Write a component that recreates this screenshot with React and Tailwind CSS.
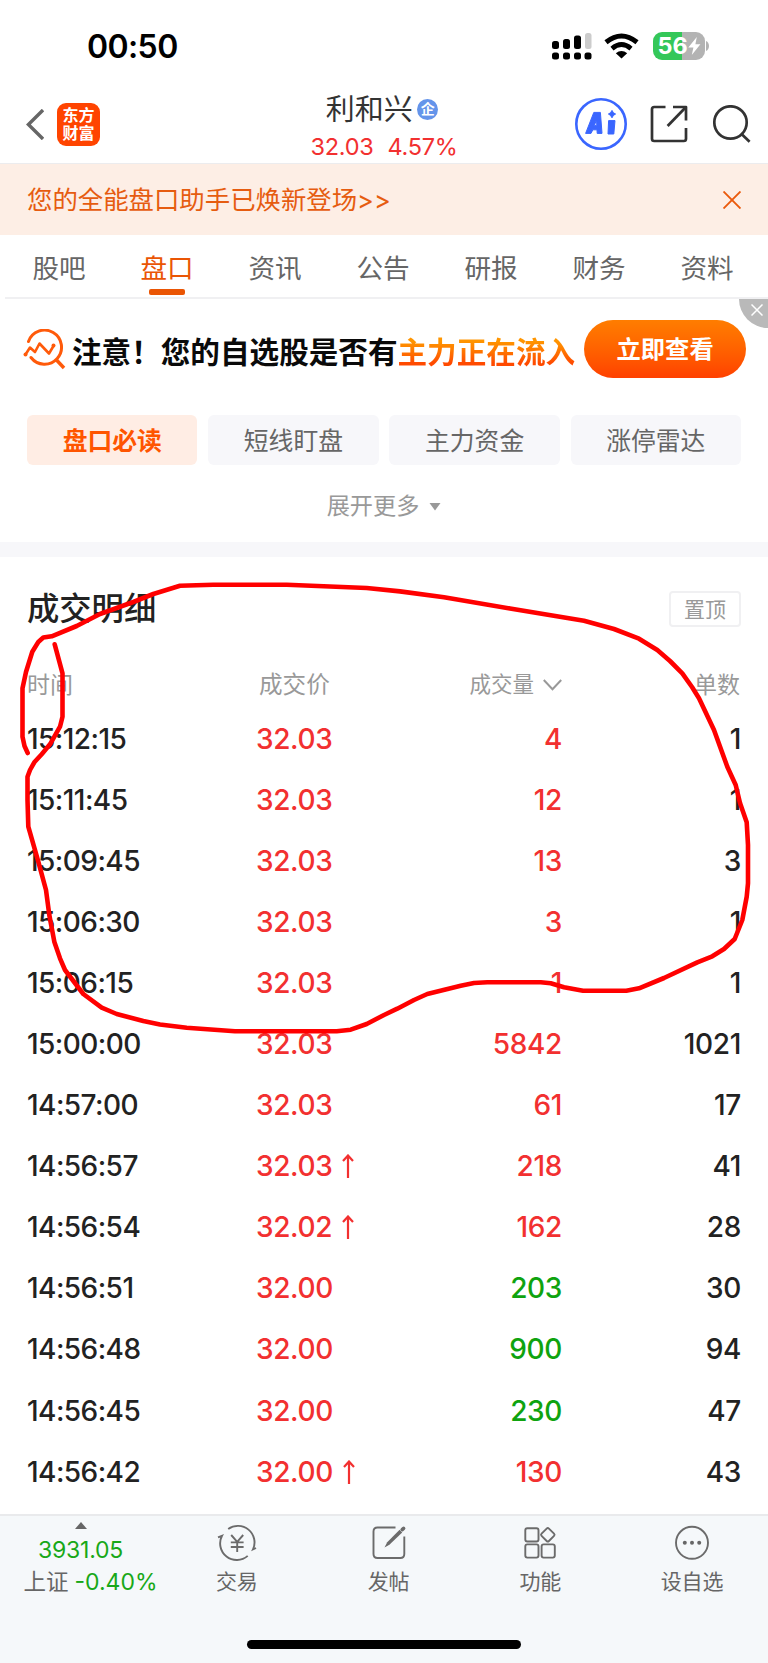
import React, { useState } from 'react';

const tabs = ['股吧', '盘口', '资讯', '公告', '研报', '财务', '资料'];
const shortcuts = ['盘口必读', '短线盯盘', '主力资金', '涨停雷达'];

const trades = [
  { time: '15:12:15', price: '32.03', volume: '4', count: '1' },
  { time: '15:11:45', price: '32.03', volume: '12', count: '1' },
  { time: '15:09:45', price: '32.03', volume: '13', count: '3' },
  { time: '15:06:30', price: '32.03', volume: '3', count: '1' },
  { time: '15:06:15', price: '32.03', volume: '1', count: '1' },
  { time: '15:00:00', price: '32.03', volume: '5842', count: '1021' },
  { time: '14:57:00', price: '32.03', volume: '61', count: '17' },
  { time: '14:56:57', price: '32.03', up: true, volume: '218', count: '41' },
  { time: '14:56:54', price: '32.02', up: true, volume: '162', count: '28' },
  { time: '14:56:51', price: '32.00', volume: '203', sell: true, count: '30' },
  { time: '14:56:48', price: '32.00', volume: '900', sell: true, count: '94' },
  { time: '14:56:45', price: '32.00', volume: '230', sell: true, count: '47' },
  { time: '14:56:42', price: '32.00', up: true, volume: '130', count: '43' },
];

const StatusBar = () => (
  <div className="flex h-[90px] items-center justify-between pl-[87px] pr-[58px] pt-[1px]">
    <span className="pt-[2px] text-[32px] font-semibold leading-none tracking-[-0.6px] text-black">00:50</span>
    <div className="flex items-center">
      <svg width="40" height="28" viewBox="0 0 40 28">
        <rect x="0" y="9" width="7" height="8" rx="2.5" />
        <rect x="11" y="7" width="7" height="10" rx="2.5" />
        <rect x="22" y="3.5" width="7" height="13.5" rx="2.5" />
        <rect x="33" y="1" width="6.5" height="16" rx="2.5" fill="#ccc" />
        <rect x="0" y="20.5" width="7" height="7" rx="2.5" />
        <rect x="11" y="20.5" width="7" height="7" rx="2.5" />
        <rect x="22" y="20.5" width="7" height="7" rx="2.5" />
        <rect x="32.5" y="20.5" width="7" height="7" rx="2.5" />
      </svg>
      <svg className="ml-[12.5px]" width="35" height="26" viewBox="0 0 35 26">
        <path d="M2 9.2 Q17.5 -3.2 33 9.2" fill="none" stroke="#000" strokeWidth="5" />
        <path d="M8 15.6 Q17.5 7.6 27 15.6" fill="none" stroke="#000" strokeWidth="4.8" />
        <path d="M11.8 20.2 Q17.5 15.6 23.2 20.2 L17.5 25.5Z" />
      </svg>
      <div className="ml-[13.5px] flex h-7 w-[52px] items-center rounded-[9px] bg-linear-to-r from-[#34c759] from-56% to-[#b3b3b3] to-56% pl-[5px]">
        <span className="text-[23.5px] font-bold leading-none text-white">56</span>
        <svg width="13" height="18" viewBox="0 0 13 18" fill="#fff">
          <path d="M8.8 0 L0.3 10.4 H5.4 L3.8 18 L12.4 7.2 H7.4Z" />
        </svg>
      </div>
      <svg className="ml-[1.5px]" width="4" height="10" viewBox="0 0 4 10">
        <path d="M0 0 C4 1.5 4 8.5 0 10Z" fill="#b3b3b3" />
      </svg>
    </div>
  </div>
);

const Header = () => (
  <header className="grid h-[74px] grid-cols-[257px_1fr_257px] border-b border-[#ececee]">
    <div className="flex items-center pb-[6px] pl-[26px] pt-[1px]">
      <svg width="18" height="31" viewBox="0 0 18 31" fill="none" stroke="#666" strokeWidth="3.4">
        <path d="M17 1 L2.4 15.5 L17 30" />
      </svg>
      <div className="ml-[13px] flex size-[43px] flex-col items-center justify-center rounded-[9px] bg-[#ff4400] text-[16px] font-bold leading-[17.5px] text-white">
        <span>东方</span>
        <span>财富</span>
      </div>
    </div>
    <div className="flex flex-col items-center">
      <div className="flex h-[38px] items-center gap-[4.5px] pr-[4px]">
        <h1 className="text-[29px] leading-none text-[#333]">利和兴</h1>
        <span className="flex size-[21px] items-center justify-center rounded-full bg-[#6494ea] text-[14px] font-bold leading-none text-white">
          企
        </span>
      </div>
      <div className="flex h-[36px] items-center gap-[14px] pt-[2px] text-[23.5px] leading-none tracking-[-0.3px] text-[#f23030]">
        <span>32.03</span>
        <span>4.57%</span>
      </div>
    </div>
    <div className="flex items-center justify-end pb-[6px] pr-[17px]">
      <svg width="52" height="52" viewBox="0 0 52 52" fill="none">
        <circle cx="26" cy="26" r="24.7" stroke="#3a66ff" strokeWidth="2.6" />
        <g fill="#3a66ff" stroke="#3a66ff" strokeWidth="1" strokeLinejoin="round">
          <path
            d="M18.8 14.4 H25.4 L27 35.4 H22.2 L22 31.8 H17.8 L16 35.4 H10.6Z M19.4 27.4 H21.8 L21.5 21.8Z"
            fillRule="evenodd"
          />
          <path d="M33.6 22.6 H40 L38.8 36 H33Z" />
          <path d="M37 12.4 L38.4 14.8 L40.6 16 L38.4 17.4 L37 19.8 L35.5 17.4 L33.4 16 L35.5 14.8Z" />
        </g>
      </svg>
      <svg className="ml-[23px]" width="38" height="38" viewBox="0 0 38 38" fill="none" stroke="#333" strokeWidth="2.7">
        <path d="M15.5 2 H4.2 Q2 2 2 4.2 V33.8 Q2 36 4.2 36 H33.8 Q36 36 36 33.8 V23" />
        <path d="M23 2 H36 V15.5" strokeLinejoin="round" />
        <path d="M36 2 L17.6 21" />
      </svg>
      <svg className="ml-[24px]" width="39" height="38" viewBox="0 0 39 38" fill="none" stroke="#333" strokeWidth="2.7">
        <circle cx="18.5" cy="17.5" r="16.2" />
        <path d="M29 28.5 L37.6 36.8" />
      </svg>
    </div>
  </header>
);

const Notice = () => (
  <div className="flex h-[71px] items-center justify-between bg-[#fdeee5] pl-[27px] pr-[27px] text-[25.4px] leading-none text-[#e65c10]">
    <span className="pt-[1px]">您的全能盘口助手已焕新登场&gt;&gt;</span>
    <svg width="18" height="18" viewBox="0 0 18 18" fill="none" stroke="#ea5a0c" strokeWidth="1.9">
      <path d="M0.5 0.5 L17.5 17.5 M17.5 0.5 L0.5 17.5" />
    </svg>
  </div>
);

const Tabs = () => {
  const [active, setActive] = useState('盘口');

  return (
    <nav className="ml-[5px] grid h-[64px] grid-cols-7 border-b-2 border-[#f0f0f2] pr-[7px]">
      {tabs.map((tab) => (
        <button key={tab} className="flex flex-col items-center pt-[20px]" onClick={() => setActive(tab)}>
          <span className={`text-[26.6px] leading-none ${tab === active ? 'text-[#ea5504]' : 'text-[#666]'}`}>{tab}</span>
          {tab === active && <span className="mt-[7px] h-[6px] w-[36px] shrink-0 rounded-[2px] bg-[#ea5504]" />}
        </button>
      ))}
    </nav>
  );
};

const Promo = () => (
  <div className="relative flex h-[101px] items-center pb-[1px] pl-[23px]">
    <svg width="43" height="41" viewBox="0 0 43 41" fill="none" stroke="#ff5a0a" strokeWidth="3">
      <path d="M5.5 12.5 A17 17 0 1 1 8 28.5" strokeLinecap="round" />
      <path d="M33.5 31 L41 39" strokeWidth="3.4" />
      <path d="M2.5 25.5 L7 18.5 L12 23 L16.5 14.5 L26 24.5 L30.5 17" strokeWidth="2.6" strokeLinejoin="round" />
      <circle cx="2.5" cy="25.5" r="2" fill="#ff5a0a" stroke="none" />
      <circle cx="30.5" cy="16.5" r="2" fill="#ff5a0a" stroke="none" />
    </svg>
    <p className="ml-[6px] whitespace-nowrap pt-[5px] text-[29.6px] font-bold leading-[36px] text-[#0a0a0a]">
      注意！您的自选股是否有
      <span className="bg-linear-to-b from-[#ff9500] from-20% to-[#ff4a00] to-80% bg-clip-text text-transparent">
        主力正在流入
      </span>
    </p>
    <button className="ml-[9px] h-[58px] w-[162px] rounded-full bg-linear-to-b from-[#ff7d00] to-[#ff4000] text-[24.3px] font-bold leading-none text-white">
      立即查看
    </button>
    <button className="absolute right-0 top-0 flex h-[29px] w-[29px] items-center justify-center rounded-bl-full bg-[#b9b9b9] pb-[7px] pl-[7px]">
      <svg width="12" height="12" viewBox="0 0 12 12" fill="none" stroke="#fff" strokeWidth="1.5">
        <path d="M0.5 0.5 L11.5 11.5 M11.5 0.5 L0.5 11.5" />
      </svg>
    </button>
  </div>
);

const Shortcuts = () => (
  <div className="h-[142px] px-[27px] pt-[15px]">
    <div className="grid grid-cols-4 gap-[10.7px]">
      {shortcuts.map((name, i) => (
        <button
          key={name}
          className={`h-[50px] rounded-[6px] pt-[2px] text-[24.8px] leading-none ${
            i === 0 ? 'bg-[#ffede4] font-bold text-[#ff5500]' : 'bg-[#f7f7fa] text-[#666]'
          }`}
        >
          {name}
        </button>
      ))}
    </div>
    <button className="mx-auto flex h-[84px] items-center justify-center gap-[10px] text-[23.2px] leading-none text-[#999]">
      展开更多
      <svg width="12" height="8" viewBox="0 0 12 8" fill="#999">
        <path d="M0.5 0 H11.5 L6 7.5Z" />
      </svg>
    </button>
  </div>
);

const UpArrow = () => (
  <svg className="ml-[10px]" width="12" height="24" viewBox="0 0 12 24" fill="none" stroke="#f23030" strokeWidth="2.2">
    <path d="M6 24 V1.5 M1 7 L6 1.5 L11 7" />
  </svg>
);

const TradeList = () => (
  <section className="h-[957px] px-[27px]">
    <div className="flex h-[104px] items-center justify-between">
      <h2 className="pt-[1px] text-[32.3px] font-medium leading-none text-[#222]">成交明细</h2>
      <button className="h-[36px] w-[72px] rounded-[4px] border-2 border-[#f0f0f2] text-[21px] leading-none text-[#999]">
        置顶
      </button>
    </div>
    <div className="grid h-[47px] grid-cols-[230px_150px_155px_179px] items-center pt-[1px] text-[23px] leading-none text-[#999]">
      <span>时间</span>
      <span className="pl-[2px] text-[23.6px]">成交价</span>
      <span className="flex items-center justify-end gap-[9px] text-[21.5px]">
        成交量
        <svg width="19" height="12" viewBox="0 0 19 12" fill="none" stroke="#999" strokeWidth="2">
          <path d="M0.8 1 L9.5 10.3 L18.2 1" />
        </svg>
      </span>
      <span className="pr-[1px] text-right">单数</span>
    </div>
    {trades.map((trade) => (
      <div
        key={trade.time}
        className="grid h-[61.1px] grid-cols-[229px_151px_155px_179px] items-center text-[28px] font-medium leading-none tracking-[-0.35px] text-[#222]"
      >
        <span className="tracking-[-0.55px]">{trade.time}</span>
        <span className="flex items-center text-[#f23030]">
          {trade.price}
          {trade.up && <UpArrow />}
        </span>
        <span className={`text-right ${trade.sell ? 'text-[#0fa30f]' : 'text-[#f23030]'}`}>{trade.volume}</span>
        <span className="text-right">{trade.count}</span>
      </div>
    ))}
  </section>
);

const NavItem = ({ label, children }) => (
  <button className="flex flex-col items-center pt-[8px] text-[21px] leading-none text-[#666]">
    <svg width="40" height="38" viewBox="0 0 40 38" fill="none" stroke="#6b6b6b" strokeWidth="1.9">
      {children}
    </svg>
    <span className="mt-[9px]">{label}</span>
  </button>
);

const BottomBar = () => (
  <footer className="h-[149px] border-t-2 border-[#e9eaec] bg-[#f5f8fa]">
    <div className="grid h-[124px] grid-cols-[161px_repeat(4,1fr)]">
      <div className="flex flex-col items-center pt-[6px]">
        <svg width="12" height="7" viewBox="0 0 12 7" fill="#666">
          <path d="M0 7 H12 L6 0Z" />
        </svg>
        <span className="mt-[10px] text-[23px] leading-none tracking-[-0.2px] text-[#18a818]">3931.05</span>
        <div className="mt-[8px] flex items-center gap-[6px] pl-[20px] text-[22.5px] leading-none text-[#666]">
          上证
          <span className="pt-[1px] text-[23px] text-[#18a818]">-0.40%</span>
        </div>
      </div>
      <NavItem label="交易">
        <path d="M11.2 5 A16.6 16.6 0 0 1 36 25.4 L39 24 M30.7 31.9 A16.6 16.6 0 0 1 5 11.8 L1 13.4" />
        <path d="M14.2 11 L20.2 17.8 L26.2 11 M20.2 17.8 V28 M13.8 18.4 H26.6 M13.8 23 H26.6" />
      </NavItem>
      <NavItem label="发帖">
        <path d="M26.5 3.5 H8.5 Q4.5 3.5 4.5 7.5 V30 Q4.5 34 8.5 34 H31.3 Q35.3 34 35.3 30 V12.5" />
        <path d="M15.5 23.4 L18.2 18.2 L30.6 5.8 L33.2 8.4 L20.4 20.8Z" fill="#6b6b6b" stroke="none" />
        <path d="M33.2 5.6 L34.6 4.4" strokeWidth="3.6" strokeLinecap="round" />
      </NavItem>
      <NavItem label="功能">
        <rect x="5.3" y="4.3" width="13.2" height="13.2" rx="2" />
        <rect x="5.3" y="20.4" width="13.2" height="13.2" rx="2" />
        <rect x="21.6" y="20.4" width="13.2" height="13.2" rx="2" />
        <rect x="22.6" y="5.6" width="10.4" height="10.4" rx="1.6" transform="rotate(45 27.8 10.8)" />
      </NavItem>
      <NavItem label="设自选">
        <circle cx="20" cy="18.8" r="16" />
        <g fill="#666" stroke="none">
          <circle cx="12.8" cy="18.8" r="2" />
          <circle cx="20" cy="18.8" r="2" />
          <circle cx="27.2" cy="18.8" r="2" />
        </g>
      </NavItem>
    </div>
    <div className="mx-auto h-[9px] w-[274px] rounded-full bg-black" />
  </footer>
);

// Hand-drawn red marker loop over the trade list
const Marker = () => (
  <svg
    className="pointer-events-none absolute left-0 top-0"
    width="768"
    height="1663"
    viewBox="0 0 768 1663"
    fill="none"
    stroke="#ff0000"
    strokeWidth="4.6"
    strokeLinecap="round"
    strokeLinejoin="round"
  >
    <path d="M27.7 753 L24.5 746 L22.5 736.7 V688.3 L26 672 L32.3 651.7 L38.3 642 L43.3 637.6 L51.7 636.3 L76.7 626 L100 614 L133.3 602 L153.3 594 L180 585.7 L213.3 584.7 H286.7 L366.7 588 L400 591.4 L444 597.3 L510 608.5 L584 620.7 L614 629 L639 638.7 L657.3 650 L670 661 L682.3 673.3 L692 687 L699 698.3 L714 730 L727.3 766.7 L735.7 785 L740 803 L746.7 822.3 L748 845 V883.3 L746.7 896.7 L742.3 920 L734.7 939 L724 949 L712.3 956.3 L697.3 962.3 L664 978 L639 988.3 L626.3 990.7 H583 L564 987.3 L550.7 983.3 L540.7 982.3 H487.3 L474 983 L460.7 985.7 L427.3 994 L414 1000 L397.3 1008.7 L384 1015 L366.7 1024 L350.7 1029.7 L336.7 1031.3 H235 L186.7 1027.7 L160 1024.5 L143.3 1021 L116.7 1014 L101.7 1007.7 L83.3 994 L65 970 L60 958.3 L54.3 941.7 L49.3 915 L46 890 L38.3 861.7 L28.3 826.7 L27.5 800 V776.7 L30 770 L34.3 762.3 L41.7 754.3 L50 744.3 L60 726.7 L62.5 716.7 V673.3 L54.7 644.3" />
  </svg>
);

const App = () => (
  <div className="relative h-[1663px] w-[768px] overflow-hidden bg-white font-['Inter','Noto_Sans_CJK_SC',sans-serif]">
    <StatusBar />
    <Header />
    <Notice />
    <Tabs />
    <Promo />
    <Shortcuts />
    <div className="h-[15px] bg-[#f7f7fa]" />
    <TradeList />
    <BottomBar />
    <Marker />
  </div>
);

export default App;
